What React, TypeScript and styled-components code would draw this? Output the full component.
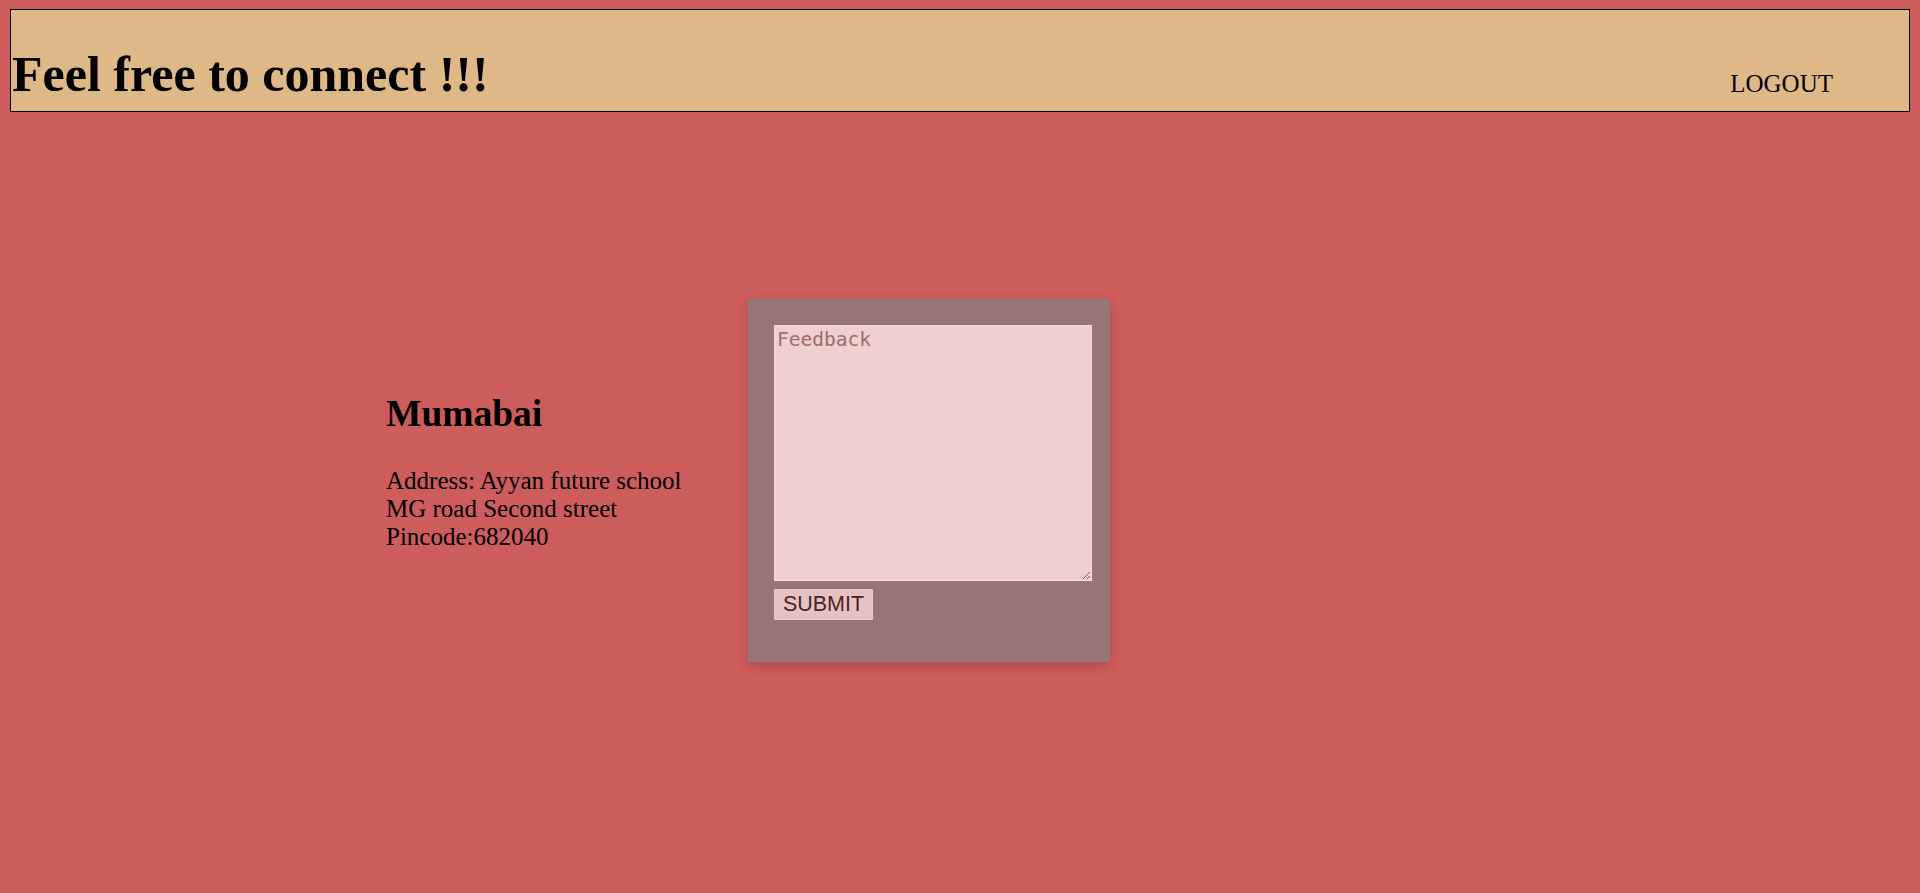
import React from "react";
import styled, { createGlobalStyle } from "styled-components";

const GlobalStyle = createGlobalStyle`
  html, body {
    margin: 0;
    padding: 0;
    background: #cd5c5c;
  }
  body {
    font-family: "Liberation Serif", "Times New Roman", serif;
    color: #000;
  }
  * { box-sizing: border-box; }
`;

const Page = styled.div`
  padding: 9px 10px 0 10px;
  min-height: 893px;
`;

const Header = styled.header`
  display: flex;
  justify-content: space-between;
  align-items: flex-start;
  height: 103px;
  border: 1px solid #000;
  background: #deb887;
`;

const Title = styled.h1`
  margin: 39px 0 0 1px;
  font-size: 50px;
  line-height: 50px;
  font-weight: bold;
`;

const Logout = styled.a`
  margin: 61px 76px 0 0;
  font-size: 25px;
  line-height: 25px;
  color: #000;
  text-decoration: none;
  cursor: pointer;
`;

const Main = styled.main`
  display: flex;
  align-items: flex-start;
  padding: 187px 0 0 376px;
`;

const Info = styled.section`
  flex: 0 0 362px;
  margin-top: 93px;
  font-size: 25px;
`;

const City = styled.h2`
  margin: 0 0 32px 0;
  font-size: 37.5px;
  font-weight: bold;
`;

const Address = styled.p`
  margin: 0;
  font-size: 25px;
`;

const Card = styled.form`
  display: flex;
  flex-direction: column;
  align-items: flex-start;
  gap: 8px;
  width: 362px;
  height: 363px;
  padding: 26px 18px 0 26px;
  background: #977574;
  box-shadow: 0 4px 10px rgba(0, 0, 0, 0.18);
`;

const Feedback = styled.textarea`
  width: 318px;
  height: 256px;
  padding: 2px;
  border: 1px solid #f4dada;
  background: #f0cfcf;
  font-family: "DejaVu Sans Mono", monospace;
  font-size: 19.5px;
  color: #3a2020;
  outline: none;
  resize: both;
  &::placeholder {
    color: #9a6e6e;
  }
`;

const Submit = styled.button`
  width: 99px;
  height: 31px;
  padding: 0;
  border: 1px solid #eccccc;
  border-radius: 1px;
  background: #e6c1c1;
  color: #4a2226;
  font-family: "Liberation Sans", Arial, sans-serif;
  font-size: 21.5px;
  line-height: 29px;
  cursor: pointer;
`;

export default function App() {
  return (
    <>
      <GlobalStyle />
      <Page>
        <Header>
          <Title>Feel free to connect !!!</Title>
          <Logout>LOGOUT</Logout>
        </Header>
        <Main>
          <Info>
            <City>Mumabai</City>
            <Address>
              Address: Ayyan future school
              <br />
              MG road Second street
              <br />
              Pincode:682040
            </Address>
          </Info>
          <Card onSubmit={(e) => e.preventDefault()}>
            <Feedback placeholder="Feedback" />
            <Submit type="submit">SUBMIT</Submit>
          </Card>
        </Main>
      </Page>
    </>
  );
}
